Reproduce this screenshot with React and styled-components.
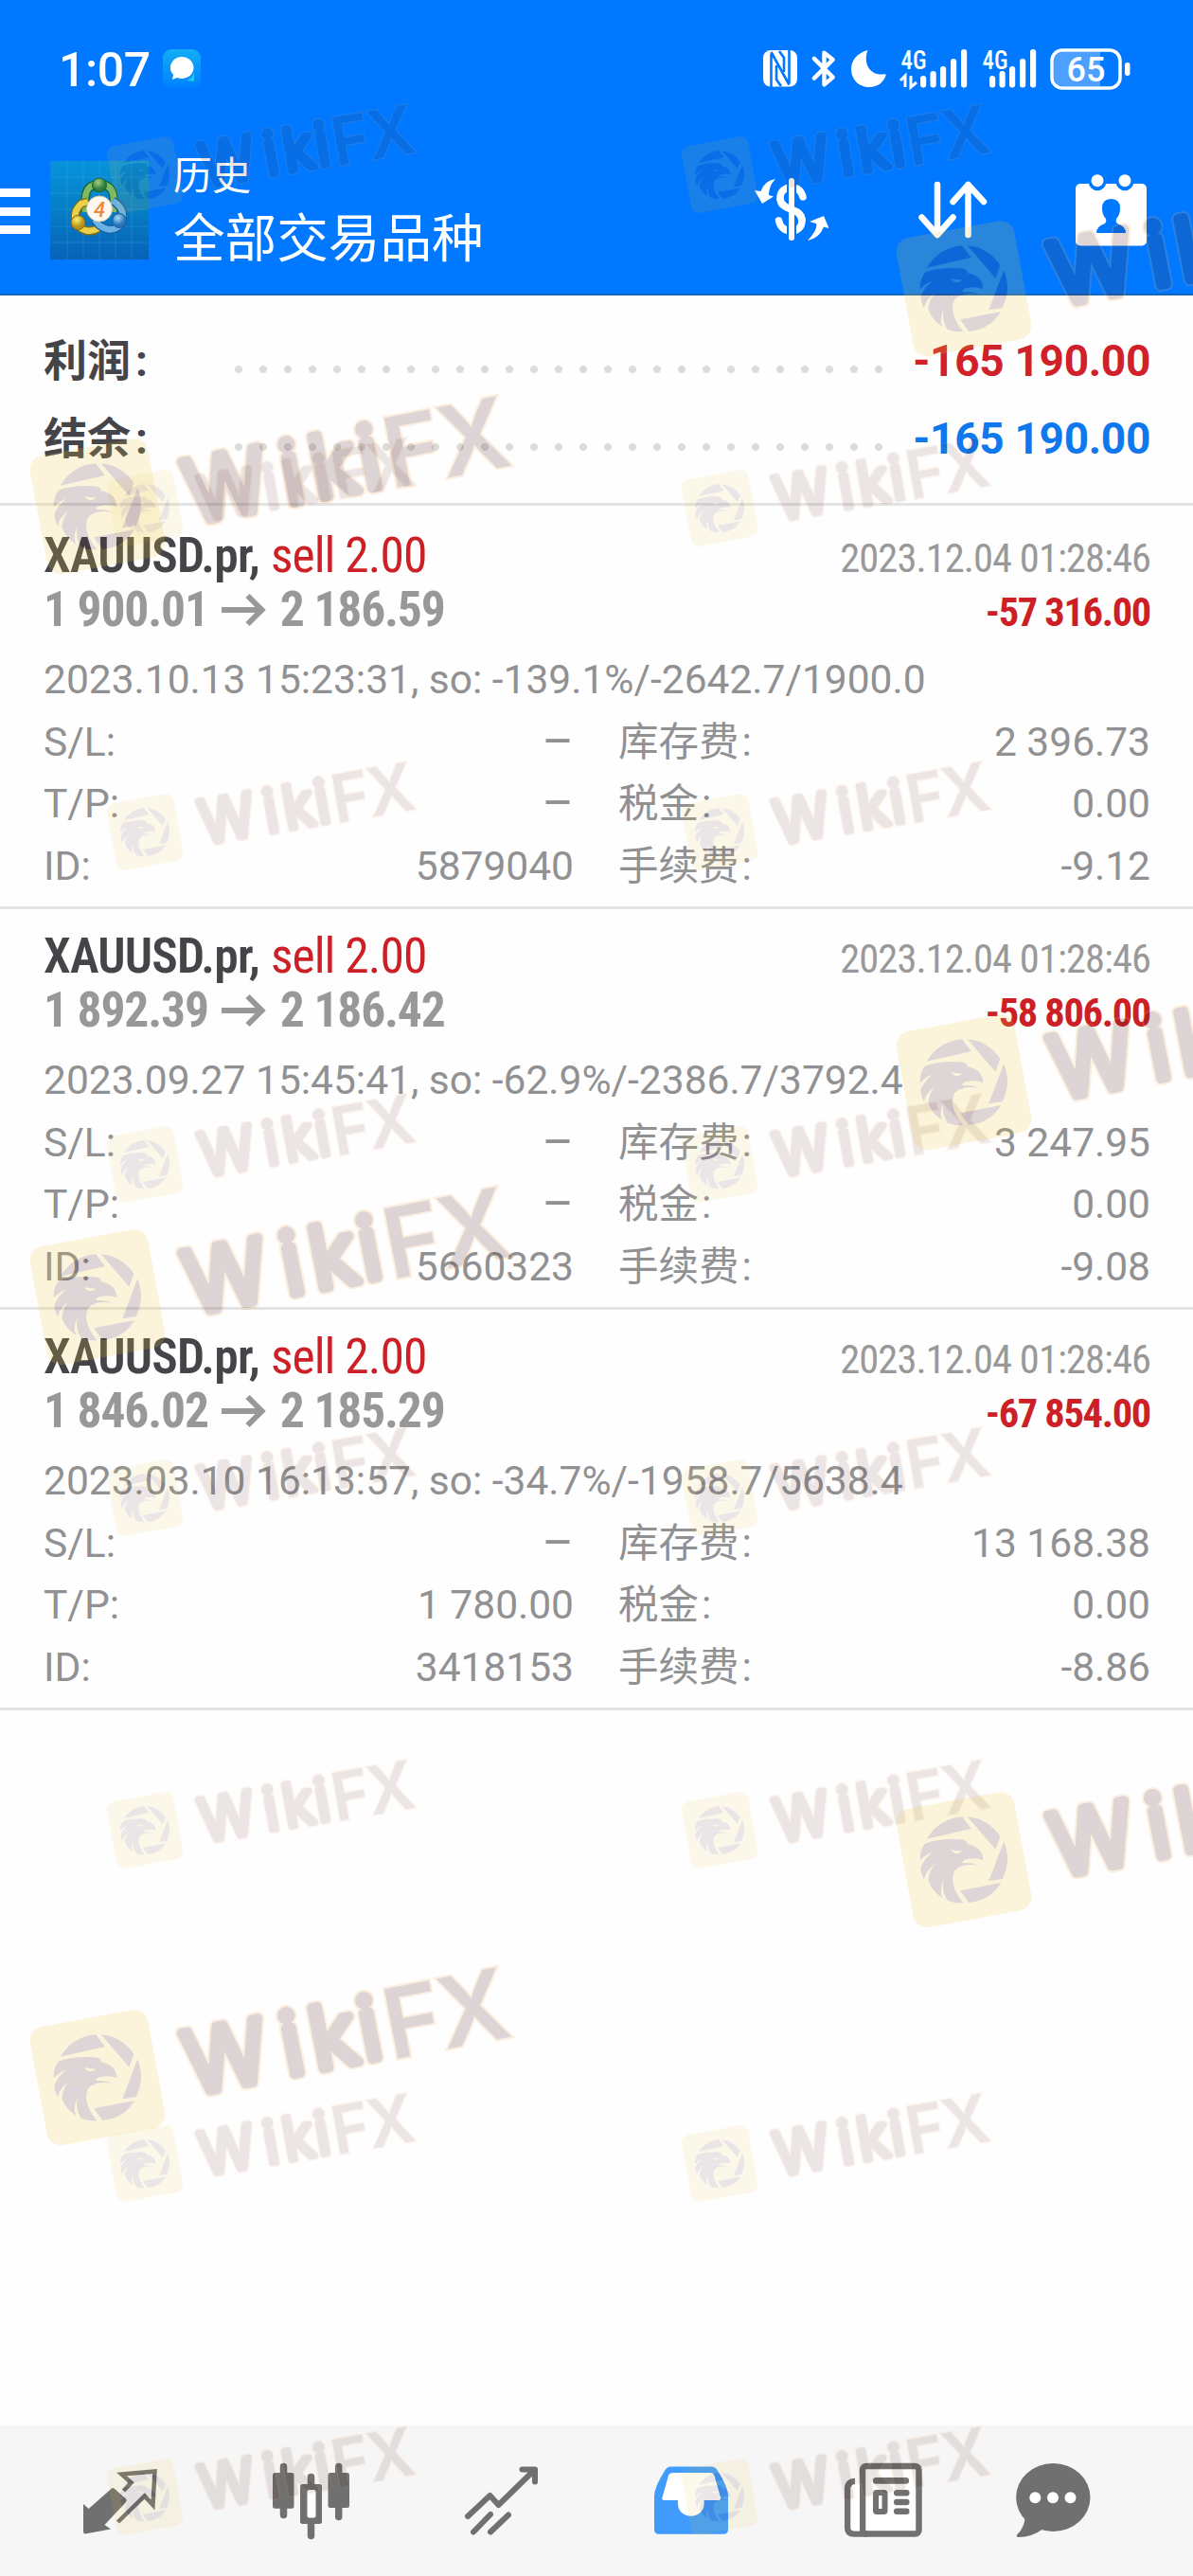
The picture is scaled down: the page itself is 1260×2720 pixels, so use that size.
import styled, { createGlobalStyle, css } from 'styled-components'

const deals = [
  {
    open: '1 900.01',
    close: '2 186.59',
    profit: '-57 316.00',
    comment: '2023.10.13 15:23:31, so: -139.1%/-2642.7/1900.0',
    id: '5879040',
    swap: '2 396.73',
    fee: '-9.12',
  },
  {
    open: '1 892.39',
    close: '2 186.42',
    profit: '-58 806.00',
    comment: '2023.09.27 15:45:41, so: -62.9%/-2386.7/3792.4',
    id: '5660323',
    swap: '3 247.95',
    fee: '-9.08',
  },
  {
    open: '1 846.02',
    close: '2 185.29',
    profit: '-67 854.00',
    comment: '2023.03.10 16:13:57, so: -34.7%/-1958.7/5638.4',
    tp: '1 780.00',
    id: '3418153',
    swap: '13 168.38',
    fee: '-8.86',
  },
]

const smallMarks = [144, 496, 838, 1189, 1541, 1892, 2244, 2596].flatMap((y) => [
  { x: 113, y },
  { x: 720, y },
])

const largeMarks = [
  { x: 947, y: 233 },
  { x: 32, y: 463 },
  { x: 947, y: 1071 },
  { x: 32, y: 1298 },
  { x: 947, y: 1892 },
  { x: 32, y: 2122 },
]

const signal = [
  [0, 28],
  [10.5, 23],
  [21, 18],
  [32, 10],
  [43, 0],
]

function Signal({ arrows }) {
  const left = arrows ? 21 : 8
  return (
    <svg width={left + 49} height='41' viewBox={`0 0 ${left + 49} 41`} fill='#fff'>
      <text x='0.500' y='20.500' fontSize='27' fontWeight='500' fontFamily='Roboto Condensed' textLength='27' lengthAdjust='spacingAndGlyphs'>
        4G
      </text>
      {arrows && (
        <path d='M5 40V28L0 33M11 28V40L17 35' fill='none' stroke='#fff' strokeWidth='3' />
      )}
      {signal.map(([x, y]) => (
        <rect key={x} x={x + left} y={y} width='6.200' height={40.5 - y} rx='3' />
      ))}
    </svg>
  )
}

function StatusIcons() {
  return (
    <StatusRight>
      <svg width='36' height='39' viewBox='0 0 36 39'>
        <rect width='36' height='38.500' rx='8' fill='#fff' />
        <path d='M8.500 4V39M8.500 2L27.500 36.500M27.500 35V0M14 16V31L19 38M22 23V8L17 1' fill='none' stroke='#0078ff' strokeWidth='2.600' />
      </svg>
      <svg width='26' height='41' viewBox='0 0 27 41' fill='none' stroke='#fff' strokeWidth='4.600' strokeLinecap='round' strokeLinejoin='round'>
        <path d='M3 9.500L23.500 30L14 38V3L23.500 10.500L3 31' />
      </svg>
      <svg width='37' height='41' viewBox='0 0 37 41' fill='#fff'>
        <path d='M17.500 1C6 4 0 12 0 21C0 32 8 40 19 40C28 40 34 35 36.500 28C37 26 36 26 34 26.500C20 28 12 15 17.500 1Z' />
      </svg>
      <Signal arrows />
      <Signal />
      <svg width='85' height='44' viewBox='0 0 85 44'>
        <path d='M14 4H53V40H14Q4 40 4 30V14Q4 4 14 4Z' fill='#fff' opacity='0.3' />
        <rect x='2' y='2' width='72' height='40' rx='11' fill='none' stroke='#fff' strokeWidth='3.500' />
        <rect x='79' y='15' width='5.500' height='14' rx='2.700' fill='#fff' />
        <text x='38' y='35' fontSize='36' fontWeight='500' fontFamily='Roboto' fill='#fff' textAnchor='middle'>
          65
        </text>
      </svg>
    </StatusRight>
  )
}

function ChatBadge() {
  return (
    <svg width='40' height='41' viewBox='0 0 40 41'>
      <defs>
        <linearGradient id='chatBg' x1='0' y1='0' x2='0' y2='1'>
          <stop offset='0' stopColor='#12aef5' />
          <stop offset='1' stopColor='#0080ff' />
        </linearGradient>
      </defs>
      <rect width='40' height='41' rx='9' fill='url(#chatBg)' />
      <path d='M25 33Q32 30 33 24V34Z' fill='#20c8f8' />
      <path d='M19 8A12.500 11.500 0 1 1 15 30L10 32L11 27A12.500 11.500 0 0 1 19 8Z' fill='#fff' />
    </svg>
  )
}

function TraderLogo() {
  return (
    <svg width='104' height='104' viewBox='0 0 104 104'>
      <defs>
        <linearGradient id='logoBg' x1='0' y1='0' x2='0' y2='1'>
          <stop offset='0' stopColor='#0793dc' />
          <stop offset='0.450' stopColor='#0580c6' />
          <stop offset='1' stopColor='#0862b8' />
        </linearGradient>
        <radialGradient id='green' cx='0.400' cy='0.300'>
          <stop offset='0' stopColor='#9fd27c' />
          <stop offset='1' stopColor='#2f7d3c' />
        </radialGradient>
        <radialGradient id='gold' cx='0.400' cy='0.300'>
          <stop offset='0' stopColor='#fff07a' />
          <stop offset='1' stopColor='#b99118' />
        </radialGradient>
        <radialGradient id='azure' cx='0.400' cy='0.300'>
          <stop offset='0' stopColor='#a8dcfa' />
          <stop offset='1' stopColor='#2a74b8' />
        </radialGradient>
      </defs>
      <rect width='104' height='104' fill='url(#logoBg)' />
      <path d='M18 0V104M35 0V104M52 0V104M69 0V104M86 0V104M0 17H104M0 34H104M0 51H104M0 69H104M0 86H104' stroke='#6cc4ee' strokeOpacity='0.200' />
      <g fill='none'>
        <path d='M37 54V39Q38 25 52 24Q66 25 67 39V54' stroke='#155f3a' strokeWidth='9' />
        <path d='M37 54V39Q38 25 52 24Q66 25 67 39V54' stroke='#7dbb62' strokeWidth='6.500' />
        <path d='M51 71Q39 78 29 68Q22 55 33 45L40 43' stroke='#7d6a14' strokeWidth='9' />
        <path d='M51 71Q39 78 29 68Q22 55 33 45L40 43' stroke='#e8d04a' strokeWidth='6.500' />
        <path d='M66 42Q80 50 76 65Q67 78 52 68L47 62' stroke='#1b5c99' strokeWidth='9' />
        <path d='M66 42Q80 50 76 65Q67 78 52 68L47 62' stroke='#6ab2e4' strokeWidth='6.500' />
      </g>
      <circle cx='52' cy='25.500' r='7.500' fill='url(#green)' stroke='#155f3a' />
      <circle cx='29.500' cy='65' r='7.500' fill='url(#gold)' stroke='#7d6a14' />
      <circle cx='73' cy='63' r='7.500' fill='url(#azure)' stroke='#1b5c99' />
      <circle cx='52' cy='50.500' r='13.500' fill='#fdf9f2' stroke='#d9c7a2' />
      <text x='52' y='58.500' fontSize='22' fontWeight='500' fontStyle='italic' fontFamily='Roboto' fill='#f0873c' textAnchor='middle'>
        4
      </text>
    </svg>
  )
}

// eagle tile plus wordmark, drawn once and reused at two sizes
function MarkArt() {
  return (
    <svg width='0' height='0'>
      <defs>
        <g id='tile'>
          <rect x='7.700' y='8.200' width='126.600' height='127' rx='15' fill='#efc73c' transform='rotate(-10.500 71 71.700)' />
          <g transform='scale(0.4018 0.3333) translate(-788 -155)' fill='#4a1a24'>
            <path d='M867 304Q900 240 960 234L984 272Z' />
            <path d='M974 234Q1028 240 1060 296L1048 337Z' />
            <path d='M1070 312Q1090 374 1066 431L1030 438Z' />
            <path d='M1062 443Q1036 498 978 506L955 468Z' />
            <path
              fillRule='evenodd'
              d='M862 319Q905 300 965 307Q976 313 973 321Q1014 328 1015 372Q998 362 970 369Q956 376 963 381Q985 377 1003 388Q960 380 941 403Q922 445 963 507Q940 508 922 499Q905 470 912 433Q899 465 908 490Q880 470 871 435Q874 400 890 382Q864 405 860 432Q850 410 852 392Q862 365 882 346Q864 352 850 372Q848 342 862 319ZM930 337Q938 352 949 350Q956 349 961 342Q945 344 930 337Z'
            />
          </g>
        </g>
        <g id='wordmark'>
          <WordRound x='0.500 104.500 135.500 188' y='-4.800' $halo>Wiki</WordRound>
          <WordSharp x='214.500 273' y='0' $halo>FX</WordSharp>
          <WordRound x='0.500 104.500 135.500 188' y='-4.800'>Wiki</WordRound>
          <WordSharp x='214.500 273' y='0'>FX</WordSharp>
        </g>
      </defs>
    </svg>
  )
}

function LargeMark(pos) {
  return (
    <Mark $pos={pos} $w={540} $h={160} $opacity={0.175}>
      <use href='#tile' />
      <use href='#wordmark' transform='translate(170.200 94.200) rotate(-11)' />
    </Mark>
  )
}

function SmallMark(pos) {
  return (
    <Mark $pos={pos} $w={350} $h={100} $opacity={0.1}>
      <use href='#tile' transform='scale(0.565)' />
      <use href='#wordmark' transform='translate(102.400 56) rotate(-10) scale(0.66 0.683)' />
    </Mark>
  )
}

function Deal({ open, close, profit, comment, tp, id, swap, fee }) {
  return (
    <DealRow>
      <Line>
        <Title>
          <Symbol>XAUUSD.pr,</Symbol>
          <Side>sell 2.00</Side>
        </Title>
        <Time>2023.12.04 01:28:46</Time>
      </Line>
      <Line>
        <Prices>
          {open}
          <svg width='47' height='34' viewBox='0 0 47 34' fill='none' stroke='currentColor' strokeWidth='6'>
            <path d='M0 17H42M27.500 2L42.500 17L27.500 32' />
          </svg>
          {close}
        </Prices>
        <Profit>{profit}</Profit>
      </Line>
      <Comment>{comment}</Comment>
      <Details>
        <Field><span>S/L:</span><Dash>–</Dash></Field>
        <Field><span>库存费<Colon>:</Colon></span><span>{swap}</span></Field>
        <Field><span>T/P:</span>{tp ? <span>{tp}</span> : <Dash>–</Dash>}</Field>
        <Field><span>税金<Colon>:</Colon></span><span>0.00</span></Field>
        <Field><span>ID:</span><span>{id}</span></Field>
        <Field><span>手续费<Colon>:</Colon></span><span>{fee}</span></Field>
      </Details>
    </DealRow>
  )
}

export default function App() {
  return (
    <Screen>
      <GlobalStyle />
      <Header>
        <StatusBar>
          <Clock>1:07</Clock>
          <ChatBadge />
          <StatusIcons />
        </StatusBar>
        <AppBar>
          <Burger>
            <i />
            <i />
            <i />
          </Burger>
          <TraderLogo />
          <Heading>
            <small>历史</small>
            <h1>全部交易品种</h1>
          </Heading>
          <Actions>
            <svg width='79' height='67' viewBox='0 0 79 67' fill='#fff'>
              <path d='M51 20C49 12.500 44 10 39 10C31 10 27 15 27 21C27 36 50 30 50 45C50 52 45 56 39 56C32 56 27 52 25.500 45' fill='none' stroke='#fff' strokeWidth='7.500' strokeLinecap='round' />
              <path d='M39 2.500V63.500' stroke='#0078ff' strokeWidth='10' />
              <path d='M27 21C27 36 50 30 50 45' fill='none' stroke='#fff' strokeWidth='7.500' />
              <path d='M39 3V63' stroke='#fff' strokeWidth='6' strokeLinecap='round' />
              <path d='M22 1Q10 3 6.500 14L0 13L8 27L20 19.500L15 18Q15 8 22 1Z' />
              <path d='M56 66Q67 54 65 48L58 46L73 40L78.500 53L73 51.500Q69 63 56 66Z' />
            </svg>
            <svg width='73' height='61' viewBox='0 0 73 61' fill='none' stroke='#fff' strokeWidth='6.500' strokeLinecap='round' strokeLinejoin='round'>
              <path d='M20 4V56M3.500 38.500L20 57L36.500 38.500M52.500 57V4M36.500 22L52.500 4L69 22' />
            </svg>
            <svg width='75' height='76' viewBox='0 0 75 76'>
              <rect y='10' width='75' height='65.500' rx='5' fill='#fff' />
              <path d='M23 7.500V8M52 7.500V8' stroke='#0078ff' strokeWidth='18.500' strokeLinecap='round' />
              <circle cx='23' cy='6.700' r='6.500' fill='#fff' />
              <circle cx='52' cy='6.700' r='6.500' fill='#fff' />
              <path d='M37.500 26Q47 26 47 36Q47 43 43 47Q42 50 44 52Q53 55 53 62H22Q22 55 31 52Q33 50 32 47Q28 43 28 36Q28 26 37.500 26Z' fill='#0078ff' />
            </svg>
          </Actions>
        </AppBar>
      </Header>

      <Summary>
        <SummaryRow>
          <span>利润<Colon $gap={5}>:</Colon></span>
          <Dots />
          <Amount $color='#d0202a'>-165 190.00</Amount>
        </SummaryRow>
        <SummaryRow>
          <span>结余<Colon $gap={5}>:</Colon></span>
          <Dots />
          <Amount $color='#0f78ec'>-165 190.00</Amount>
        </SummaryRow>
      </Summary>

      <List>
        {deals.map((deal) => (
          <Deal key={deal.id} {...deal} />
        ))}
      </List>

      <TabBar>
        <svg width='78' height='100' viewBox='0 0 78 100' fill='#707070'>
          <path d='M0 53L5.600 58L30 36.500Q31.500 35.500 33 37L45 47.500Q46.500 49 45 51L22.500 75L29 79.500L2 84.500Q0 84.500 0 82Z' />
          <path d='M42.500 39L50.600 30.500L40.500 21.500L75.500 18.500L73.500 54L64.700 44.500L36.500 72' fill='none' stroke='#707070' strokeWidth='4.500' />
        </svg>
        <svg width='81' height='100' viewBox='0 0 81 100' fill='#707070'>
          <rect y='20' width='22.500' height='37.700' rx='2.500' />
          <rect x='58.500' y='20' width='22.500' height='37' rx='2.500' />
          <path d='M11.500 13.500V64.500M69.700 13.500V66.500M40.500 24.500V34M40.500 72V86.500' stroke='#707070' strokeWidth='7.500' strokeLinecap='round' />
          <rect x='29' y='32' width='23' height='42' rx='2.500' />
          <rect x='36.500' y='38' width='9' height='29.500' rx='2' fill='#fff' />
        </svg>
        <svg width='78' height='100' viewBox='0 0 78 100' fill='none' stroke='#707070' strokeWidth='6' strokeLinecap='round' strokeLinejoin='round'>
          <path d='M3 66L26.500 44L35.500 54L73.500 17M60.500 16.500H74V29.500M9 82.500L27 64M27 82.500L46 64.500' />
        </svg>
        <svg width='79' height='100' viewBox='0 0 79 100'>
          <path d='M18 13.500H60Q65 13.500 67 18Q78 35 78 45V80Q78 84.700 73 84.700H5Q0 84.700 0 80V45Q0 35 11 18Q13 13.500 18 13.500Z' fill='#3f9bfc' />
          <path d='M20 20H59Q62.500 20 63.500 23L70 46Q70.500 49 68 49H52.600V53C52.600 61 46 65.700 38.800 65.700C31.500 65.700 25 61 25 53V49H10.500Q7.500 49 8.500 46L15 23Q16 20 20 20Z' fill='#fff' />
        </svg>
        <svg width='82' height='100' viewBox='0 0 82 100' fill='#707070'>
          <rect x='19' y='13' width='59.500' height='71.500' rx='4' fill='#fff' stroke='#707070' strokeWidth='6.500' />
          <path d='M11 29Q3.200 29 3.200 37V78Q3.200 84.500 10 84.500H24' fill='none' stroke='#707070' strokeWidth='6.500' />
          <path d='M6.500 36Q7 33 10.500 32.500L16 32V81.500H9.500Q6.500 81 6.500 78Z' fill='#fff' />
          <rect x='30' y='25' width='38' height='6.700' rx='3' />
          <rect x='33' y='41' width='9.500' height='20' rx='1' fill='#fff' stroke='#707070' strokeWidth='6' />
          <rect x='52' y='38' width='16.500' height='6.500' rx='3' />
          <rect x='52' y='47.700' width='16.500' height='6.500' rx='3' />
          <rect x='52' y='57.600' width='16.500' height='6.500' rx='3' />
        </svg>
        <svg width='79' height='100' viewBox='0 0 79 100' fill='#707070'>
          <ellipse cx='39.300' cy='46' rx='39.200' ry='36' />
          <path d='M9 64Q11 76 1 85.500Q0 88 3 88Q17 88 29 79Z' />
          <g fill='#fff'>
            <circle cx='20.300' cy='46.300' r='6' />
            <circle cx='39' cy='46.300' r='6' />
            <circle cx='57.500' cy='46.300' r='6' />
          </g>
        </svg>
      </TabBar>

      <MarkArt />
      {smallMarks.map((m) => (
        <SmallMark key={`${m.x}-${m.y}`} {...m} />
      ))}
      {largeMarks.map((m) => (
        <LargeMark key={`${m.x}-${m.y}`} {...m} />
      ))}
    </Screen>
  )
}

const GlobalStyle = createGlobalStyle`
  * {
    box-sizing: border-box;
  }
  body {
    margin: 0;
    background: #fefefe;
    font-family: Roboto, "Noto Sans CJK SC", sans-serif;
  }
  svg {
    display: block;
    flex: none;
    overflow: visible;
  }
`

const Screen = styled.div`
  position: relative;
  display: flex;
  flex-direction: column;
  width: 1260px;
  height: 2720px;
  overflow: hidden;
`

const Header = styled.header`
  height: 312px;
  background: #0078ff;
  border-bottom: 2px solid #1565b8;
  color: #fff;
`

const StatusBar = styled.div`
  display: flex;
  align-items: center;
  height: 145px;
  padding: 0 66px 0 62px;
`

const Clock = styled.span`
  width: 110px;
  font-size: 50px;
  font-weight: 500;
  letter-spacing: -0.4px;
  line-height: 60px;
  padding-top: 3px;
`

const StatusRight = styled.div`
  display: flex;
  align-items: center;
  margin-left: auto;
  gap: 15.5px;
`

const AppBar = styled.div`
  display: flex;
  align-items: center;
  height: 165px;
  padding: 0 49px 12px 0;
`

const Burger = styled.div`
  display: flex;
  flex-direction: column;
  gap: 10.5px;
  width: 32px;
  margin: 3px 20.5px 0 0;
  i {
    height: 9px;
    background: #fff;
  }
`

const Heading = styled.div`
  padding: 0 0 5px 26.5px;
  line-height: 66px;
  small {
    display: block;
    font-size: 41px;
  }
  h1 {
    margin: 0;
    font-size: 54.6px;
    font-weight: 400;
  }
`

const Actions = styled.div`
  display: flex;
  align-items: center;
  gap: 93.5px;
  margin-left: auto;
`

const Summary = styled.section`
  height: 222px;
  padding: 28px 45px 0 46px;
  border-bottom: 3px solid #e3e3e3;
`

const SummaryRow = styled.div`
  display: flex;
  align-items: center;
  height: 82px;
  font-size: 46px;
  font-weight: 700;
  line-height: 82px;
  color: #454549;
  & > span:first-child {
    width: 193px;
  }
`

const Colon = styled.span`
  margin-left: ${(p) => p.$gap || 3}px;
`

const Dots = styled.i`
  width: 702px;
  height: 8px;
  margin-top: 17px;
  background: radial-gradient(circle at center, #dcdcdc 3.6px, transparent 4.4px) 0 0 / 26px 8px repeat-x;
`

const Amount = styled.b`
  margin-left: auto;
  font-weight: 700;
  letter-spacing: -0.3px;
  color: ${(p) => p.$color};
`

const List = styled.main`
  flex: 1;
  padding-top: 3px;
`

const DealRow = styled.article`
  height: 423px;
  padding: 22px 45px 0 46px;
  border-bottom: 3px solid #e3e3e3;
  color: #919193;
  font-size: 42.5px;
`

const Line = styled.div`
  display: flex;
  align-items: baseline;
  justify-content: space-between;
  height: 56px;
  line-height: 56px;
  font-family: 'Roboto Condensed', Roboto, sans-serif;
  & + & {
    margin-top: 1px;
  }
`

const Title = styled.div`
  display: flex;
  font-size: 51.5px;
`

const Symbol = styled.b`
  width: 240px;
  font-weight: 600;
  letter-spacing: -0.8px;
  color: #454549;
`

const Side = styled.span`
  color: #cc1f26;
  letter-spacing: -0.95px;
`

const Time = styled.span`
  color: #999;
  letter-spacing: -0.95px;
`

const Prices = styled.div`
  display: flex;
  align-items: center;
  gap: 14.5px;
  font-size: 51.5px;
  font-weight: 700;
  letter-spacing: -1.15px;
  color: #98989b;
`

const Profit = styled.b`
  font-weight: 700;
  letter-spacing: -1.35px;
  color: #cc1f26;
`

const Comment = styled.p`
  margin: 12.5px 0 0;
  line-height: 66px;
`

const Details = styled.div`
  display: grid;
  grid-template-columns: 560px 562px;
  column-gap: 47px;
`

const Field = styled.div`
  display: flex;
  justify-content: space-between;
  height: 65.5px;
  line-height: 65.5px;
`

const Dash = styled.span`
  font-size: 51px;
`

const TabBar = styled.nav`
  display: flex;
  gap: 122px;
  height: 159px;
  padding: 30px 0 0 88px;
  background: #f6f6f6;
  svg:last-child {
    margin-left: -23px;
  }
`

const Mark = styled.svg.attrs((p) => ({ width: p.$w, height: p.$h }))`
  position: absolute;
  left: ${(p) => p.$pos.x}px;
  top: ${(p) => p.$pos.y}px;
  overflow: visible;
  opacity: ${(p) => p.$opacity};
  pointer-events: none;
`

const halo = css`
  fill: #faac58;
  stroke: #faac58;
`

const WordRound = styled.text`
  font: 300 90px Inter, sans-serif;
  fill: #4a1a1a;
  stroke: #4a1a1a;
  stroke-width: ${(p) => (p.$halo ? 14 : 10)};
  stroke-linejoin: round;
  ${(p) => p.$halo && halo}
`

const WordSharp = styled.text`
  font: 600 103px Inter, sans-serif;
  fill: #4a1a1a;
  ${(p) => p.$halo && halo}
  stroke-width: ${(p) => (p.$halo ? 4 : 0)};
`
